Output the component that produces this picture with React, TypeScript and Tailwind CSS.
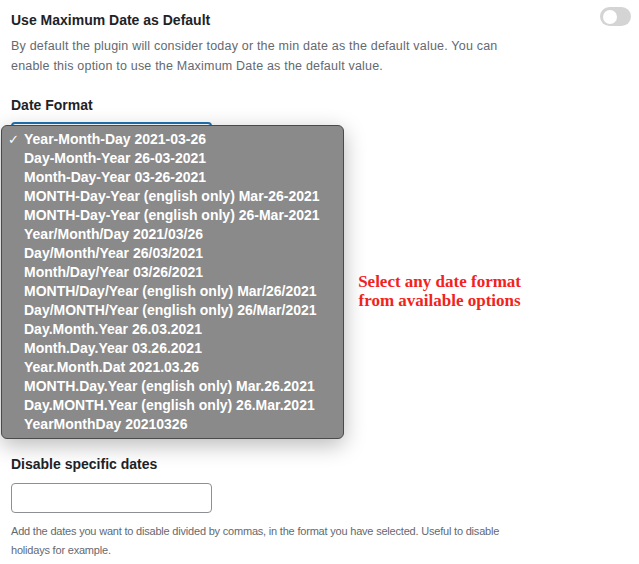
const formats = [
  "Year-Month-Day 2021-03-26",
  "Day-Month-Year 26-03-2021",
  "Month-Day-Year 03-26-2021",
  "MONTH-Day-Year (english only) Mar-26-2021",
  "MONTH-Day-Year (english only) 26-Mar-2021",
  "Year/Month/Day 2021/03/26",
  "Day/Month/Year 26/03/2021",
  "Month/Day/Year 03/26/2021",
  "MONTH/Day/Year (english only) Mar/26/2021",
  "Day/MONTH/Year (english only) 26/Mar/2021",
  "Day.Month.Year 26.03.2021",
  "Month.Day.Year 03.26.2021",
  "Year.Month.Dat 2021.03.26",
  "MONTH.Day.Year (english only) Mar.26.2021",
  "Day.MONTH.Year (english only) 26.Mar.2021",
  "YearMonthDay 20210326",
];

export default function App() {
  return (
    <div className="w-[639px] h-[564px] overflow-hidden bg-white px-[11px] pt-[10px] font-['Liberation_Sans',Arial,sans-serif] text-[#1d2327]">
      <div className="flex items-start justify-between">
        <h3 className="text-[14px] leading-5 font-semibold">Use Maximum Date as Default</h3>
        <div className="mt-[-3px] mr-[-3px] flex h-[19px] w-[31px] items-center rounded-full bg-[#d4d4d4] px-[3px]">
          <div className="h-[14px] w-[14px] rounded-full bg-white" />
        </div>
      </div>
      <p className="mt-[6px] w-[495px] text-[12.5px] leading-5 tracking-[0.2px] text-[#646970]">
        By default the plugin will consider today or the min date as the default value. You can
        enable this option to use the Maximum Date as the default value.
      </p>

      <h3 className="mt-[19px] text-[14px] leading-5 font-semibold">Date Format</h3>
      <div className="relative mt-[7px] h-[332px]">
        <div className="h-[30px] w-[201px] rounded-[4px] border-2 border-[#2271b1] bg-white" />
        <div className="mt-[120px] flex w-[616px] flex-col items-end pr-[106px] font-['Liberation_Serif',serif] text-[17px] leading-[19px] font-bold text-[#f2231d]">
          <div className="flex flex-col items-center">
            <span>Select any date format</span>
            <span>from available options</span>
          </div>
        </div>
        <ul className="absolute top-[3px] left-[-10px] w-[343px] rounded-[6px] border border-[#4a4a4a] bg-[#8a8a8a] py-[4px] text-[14px] leading-[19px] font-semibold text-white shadow-[0_6px_22px_rgba(0,0,0,0.28)]">
          {formats.map((f, i) => (
            <li key={f} className="flex items-center">
              <span className="w-[22px] pl-[6px] text-[13px] font-normal">{i === 0 ? "✓" : ""}</span>
              <span>{f}</span>
            </li>
          ))}
        </ul>
      </div>

      <h3 className="text-[14px] leading-5 font-semibold">Disable specific dates</h3>
      <div className="mt-[9px] h-[30px] w-[201px] rounded-[4px] border border-[#8c8f94] bg-white" />
      <p className="mt-[9px] w-[510px] text-[11px] leading-[19px] tracking-[-0.2px] text-[#646970]">
        Add the dates you want to disable divided by commas, in the format you have selected. Useful to disable
        holidays for example.
      </p>
    </div>
  );
}
